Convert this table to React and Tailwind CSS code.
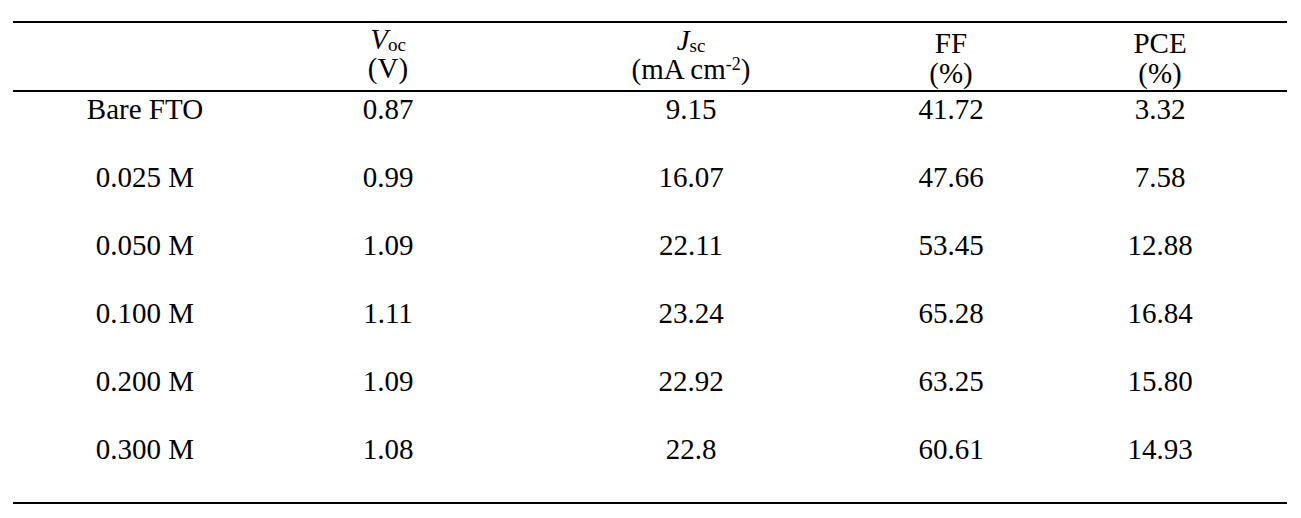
const rows = [
  ["Bare FTO", "0.87", "9.15", "41.72", "3.32"],
  ["0.025 M", "0.99", "16.07", "47.66", "7.58"],
  ["0.050 M", "1.09", "22.11", "53.45", "12.88"],
  ["0.100 M", "1.11", "23.24", "65.28", "16.84"],
  ["0.200 M", "1.09", "22.92", "63.25", "15.80"],
  ["0.300 M", "1.08", "22.8", "60.61", "14.93"],
];

const cols = "grid grid-cols-[264px_222px_384px_136px_268px]";

const App = () => {
  return (
    <div className="w-[1301px] h-[518px] bg-white pt-[21px] pl-[13px] pr-[14px] font-['Liberation_Serif',serif] text-[29px] leading-[30px] text-black">
      <div className="border-t-2 border-b-2 border-black">
        <div className={`${cols} h-[69px] border-b-2 border-black`}>
          <div></div>
          <div className="flex flex-col items-center justify-end pb-[7px] leading-[28px]">
            <span>
              <i>V</i>
              <sub className="text-[19px] bottom-[-0.1em]">oc</sub>
            </span>
            <span className="leading-[30px]">(V)</span>
          </div>
          <div className="flex flex-col items-center justify-end pb-[6px] leading-[28px]">
            <span>
              <i>J</i>
              <sub className="text-[19px] bottom-[-0.1em]">sc</sub>
            </span>
            <span className="leading-[30px]">
              (mA cm<sup className="text-[18px]">-2</sup>)
            </span>
          </div>
          <div className="flex flex-col items-center justify-end pb-[2px]">
            <span>FF</span>
            <span>(%)</span>
          </div>
          <div className="flex flex-col items-center justify-end pb-[2px] pl-[14px]">
            <span>PCE</span>
            <span>(%)</span>
          </div>
        </div>
        <div className="pb-[2px]">
          {rows.map((row) => (
            <div key={row[0]} className={`${cols} h-[68px] pt-[2px] text-center`}>
              {row.map((cell, i) => (
                <div key={i} className={i === 4 ? "pl-[14px]" : ""}>
                  {cell}
                </div>
              ))}
            </div>
          ))}
        </div>
      </div>
    </div>
  );
};

export default App;
